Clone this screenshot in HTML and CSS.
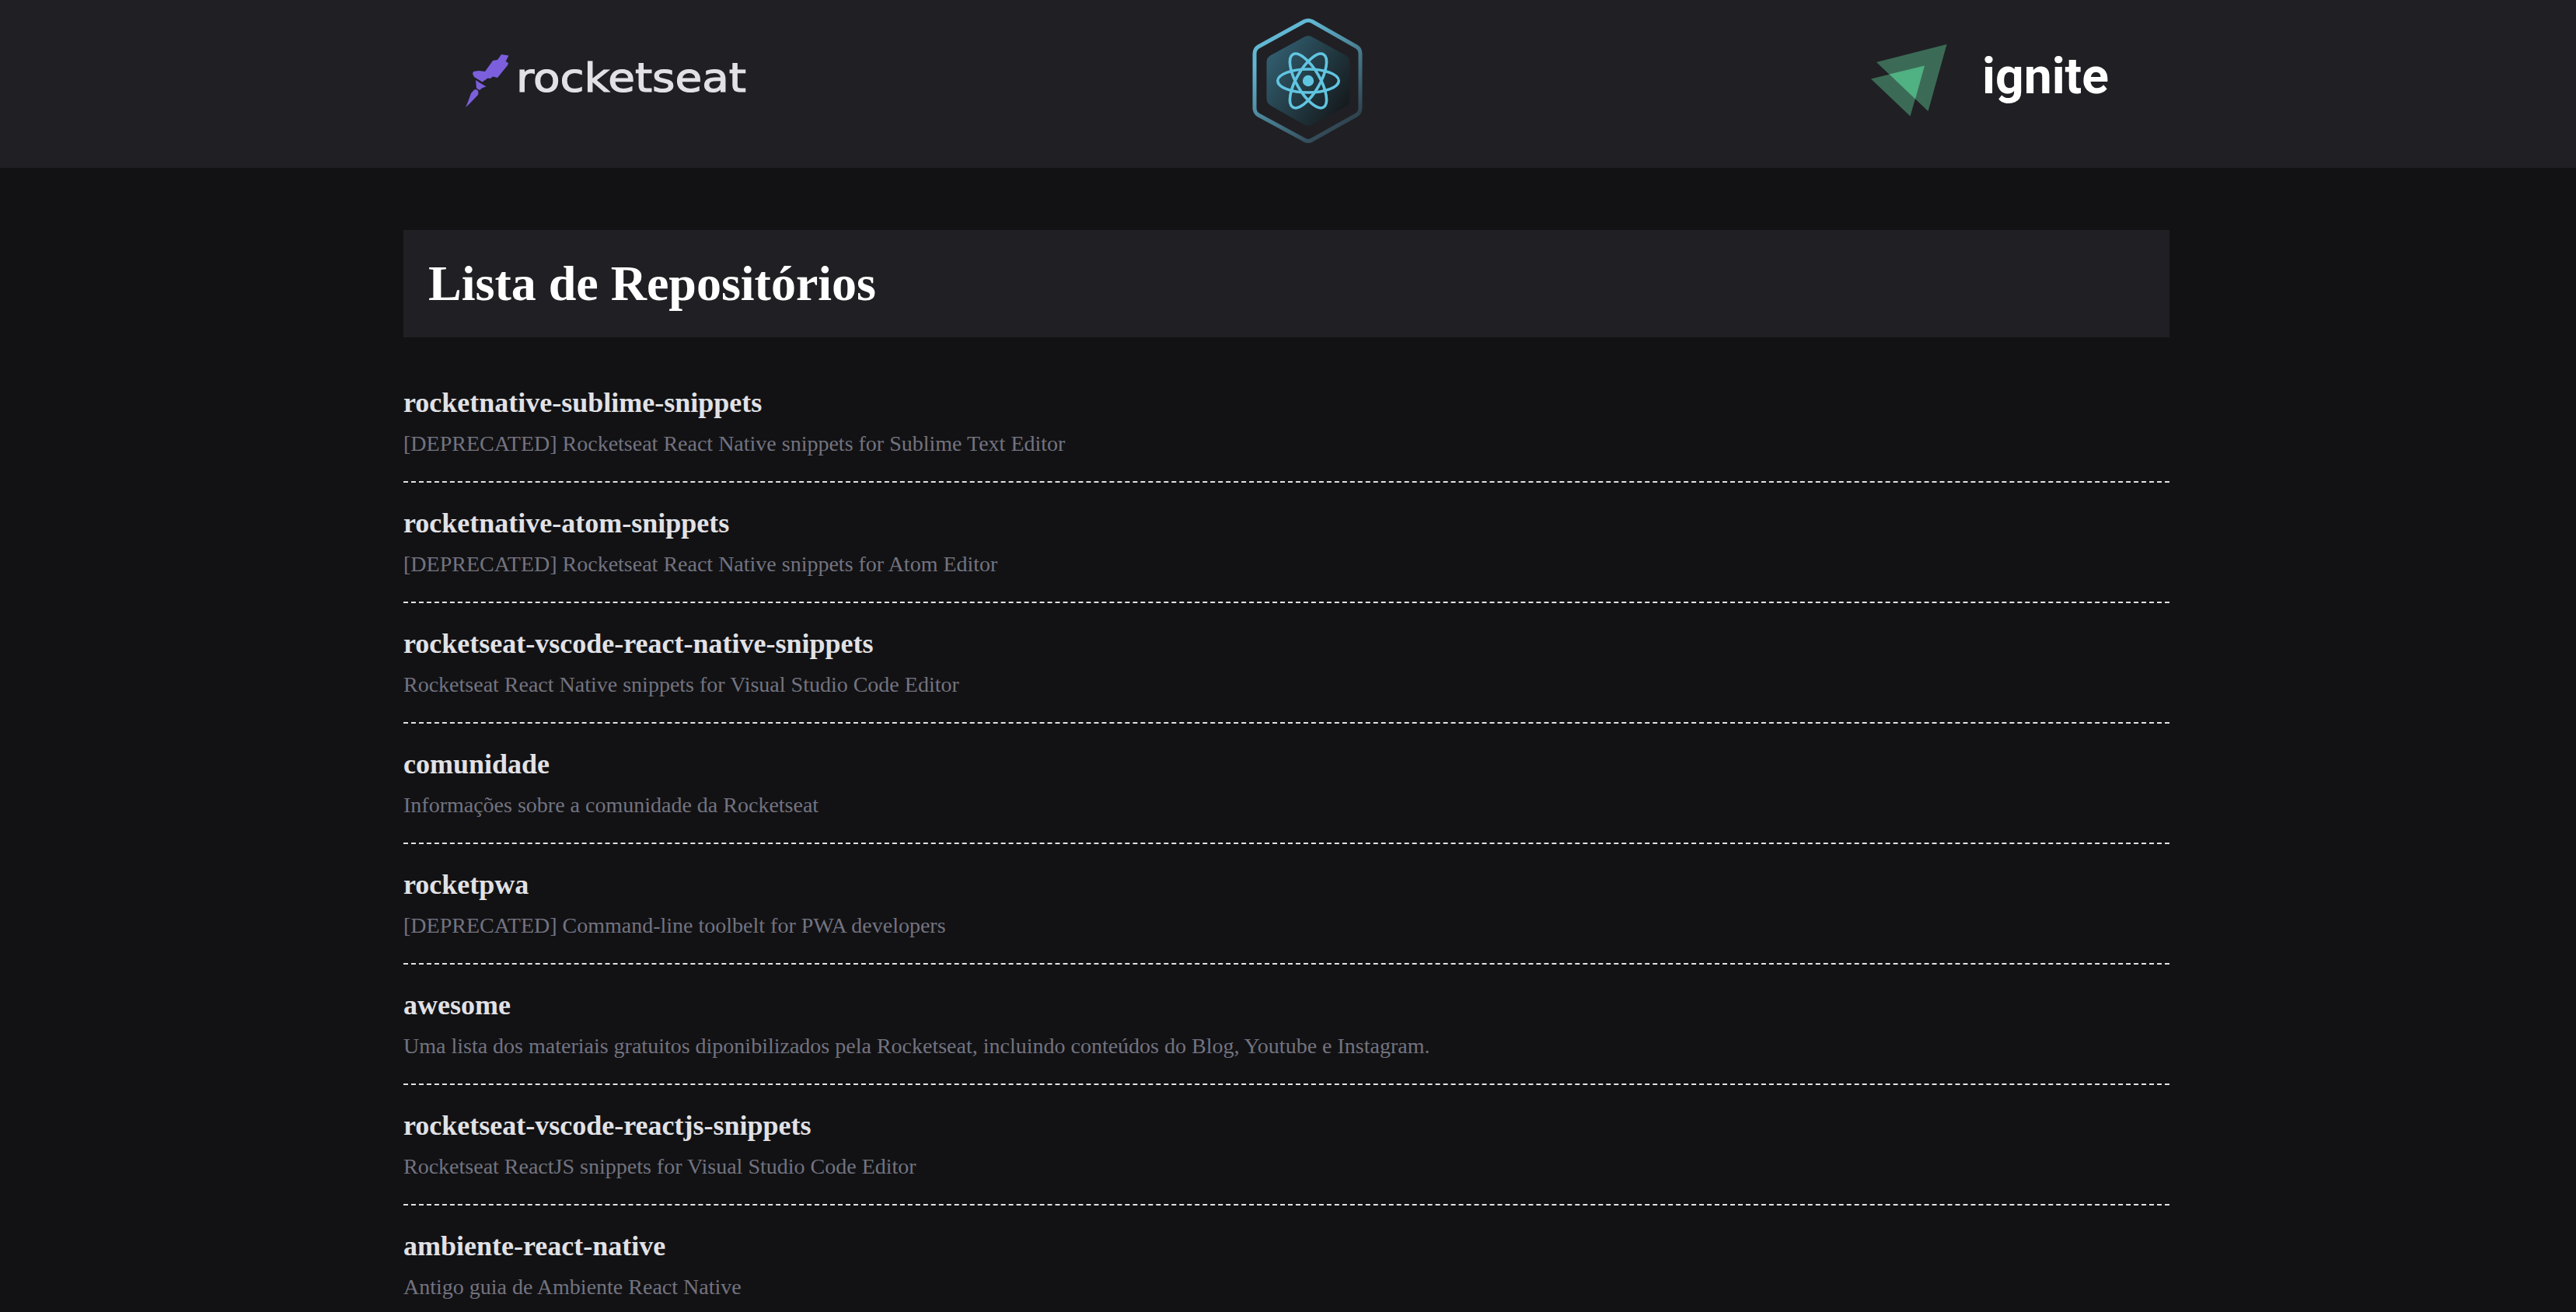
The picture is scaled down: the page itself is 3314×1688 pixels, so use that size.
FILE: index.html
```html
<!DOCTYPE html>
<html lang="pt-BR">
<head>
<meta charset="utf-8">
<title>Lista de Repositórios</title>
<link rel="stylesheet" href="styles.css">
</head>
<body>
<header class="header">
  <svg class="logo-rocketseat" width="361" height="100" viewBox="599 50 361 100" role="img" aria-label="rocketseat">
    <g class="rocket">
      <path d="M645 70 L654.5 71.5 L650.500 79 L654 81 L653 84 L640 100 L634 98.500 L631 101 L627.500 100.500 L620.500 105.500 L610 99 L608 95 L609 92 L616 91 L624 92 L634 78 L640 77 Z"/>
      <path d="M612 103 L618 107 L625.500 111.500 L620.500 113 L617 116 L613 113.500 Z"/>
      <path d="M610 115.500 Q614 114 615.500 118 L615 122 L604 133.500 L599 138 L602 131 L606 120 Z"/>
    </g>
    <text class="word-rocketseat" x="664" y="118" textLength="296" lengthAdjust="spacingAndGlyphs">rocketseat</text>
  </svg>
  <svg class="logo-react" width="145" height="162" viewBox="1611 23 145 162" aria-hidden="true">
    <defs>
      <linearGradient id="ring" x1="0.25" y1="0.2" x2="0.75" y2="0.92">
        <stop offset="0" stop-color="#61b8d3"/>
        <stop offset="1" stop-color="#314551"/>
      </linearGradient>
      <linearGradient id="core" x1="0" y1="0.15" x2="0.9" y2="0.8">
        <stop offset="0" stop-color="#336173"/>
        <stop offset="1" stop-color="#161d20"/>
      </linearGradient>
    </defs>
    <path class="ring" d="M1678 27.500 Q1683 25 1688 27.500 L1745 60 Q1750 63 1750 69 V139 Q1750 145 1745 148 L1688 180 Q1683 183 1678 180 L1619 148 Q1614 145 1614 139 V69 Q1614 63 1619 60 Z"/>
    <path class="core" d="M1678 47.500 Q1683 44.500 1688 47.500 L1731 71 Q1736.500 74 1736.500 80 V129 Q1736.500 135 1731 138 L1688 160.500 Q1683 163 1678 160.500 L1635 136 Q1629.500 133 1629.500 127 V80 Q1629.500 74 1635 71 Z"/>
    <g class="atom" transform="translate(1683 104)">
      <ellipse rx="39.300" ry="15"/>
      <ellipse rx="39.300" ry="15" transform="rotate(60)"/>
      <ellipse rx="39.300" ry="15" transform="rotate(120)"/>
      <circle class="nucleus" r="7.200"/>
    </g>
  </svg>
  <svg class="logo-ignite" width="304" height="120" viewBox="2407 40 304 120" role="img" aria-label="ignite">
    <path fill="#3b6b56" d="M2414 80 L2504.500 57 L2480.500 143 Z"/>
    <path fill="#3b6b56" d="M2407 101.500 L2476 84.500 L2457.500 149.500 Z"/>
    <path fill="#50b183" d="M2430.500 95.500 L2476 84.500 L2464 127.500 Z"/>
    <text class="word-ignite" x="2550" y="120" textLength="163" lengthAdjust="spacingAndGlyphs">ignite</text>
  </svg>
</header>
<main class="content">
  <h1 class="title"><span>Lista de Repositórios</span></h1>
  <ul class="repos">
    <li class="repo"><strong>rocketnative-sublime-snippets</strong><p>[DEPRECATED] Rocketseat React Native snippets for Sublime Text Editor</p></li>
    <li class="repo"><strong>rocketnative-atom-snippets</strong><p>[DEPRECATED] Rocketseat React Native snippets for Atom Editor</p></li>
    <li class="repo"><strong>rocketseat-vscode-react-native-snippets</strong><p>Rocketseat React Native snippets for Visual Studio Code Editor</p></li>
    <li class="repo"><strong>comunidade</strong><p>Informações sobre a comunidade da Rocketseat</p></li>
    <li class="repo"><strong>rocketpwa</strong><p>[DEPRECATED] Command-line toolbelt for PWA developers</p></li>
    <li class="repo"><strong>awesome</strong><p>Uma lista dos materiais gratuitos diponibilizados pela Rocketseat, incluindo conteúdos do Blog, Youtube e Instagram.</p></li>
    <li class="repo"><strong>rocketseat-vscode-reactjs-snippets</strong><p>Rocketseat ReactJS snippets for Visual Studio Code Editor</p></li>
    <li class="repo"><strong>ambiente-react-native</strong><p>Antigo guia de Ambiente React Native</p></li>
  </ul>
</main>
</body>
</html>
```
FILE: styles.css
```css
* {
  margin: 0;
  padding: 0;
  box-sizing: border-box;
}

body {
  height: 100vh;
  overflow: hidden;
  background: #121214;
  color: #e1e1e6;
  font-family: "Liberation Serif", "Times New Roman", serif;
}

.header {
  display: flex;
  justify-content: space-between;
  align-items: flex-start;
  height: 216px;
  padding: 0 603px 0 599px;
  background: #202024;
}

.logo-rocketseat { margin-top: 50px; }
.logo-react { margin-top: 23px; }
.logo-ignite { margin-top: 40px; }

.header svg { overflow: visible; }

.rocket { fill: #7c5fdc; }

.word-rocketseat {
  fill: #e1e1e6;
  stroke: #e1e1e6;
  stroke-width: 1.2;
  font: 51px "DejaVu Sans", sans-serif;
}

.ring {
  fill: none;
  stroke: url(#ring);
  stroke-width: 5;
}

.core { fill: url(#core); }

.atom {
  fill: none;
  stroke: #61c5e1;
  stroke-width: 3.6;
}

.atom .nucleus {
  fill: #61c5e1;
  stroke: none;
}

.word-ignite {
  fill: #fff;
  font: bold 65px Roboto, sans-serif;
}

.content {
  width: 2272px;
  margin: 80px 0 0 519px;
}

.title {
  height: 138px;
  padding: 32px;
  background: #202024;
  color: #fff;
  font-size: 64px;
  line-height: 74px;
}

.repos {
  margin-top: 63px;
  list-style: none;
}

.repo {
  height: 155px;
  padding-top: 31px;
}

.repo:first-child {
  height: 124px;
  padding-top: 0;
}

.repo:not(:last-child) {
  border-bottom: 2px dashed #e1e1e6;
}

.repo strong {
  display: block;
  font-size: 36px;
  line-height: 42px;
}

.repo p {
  margin-top: 16px;
  color: #737380;
  font-size: 28px;
  line-height: 32px;
}
```
